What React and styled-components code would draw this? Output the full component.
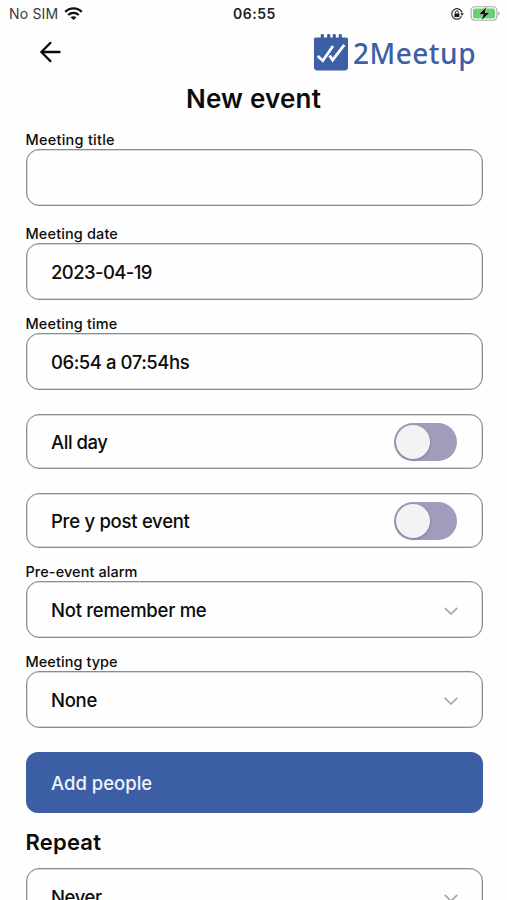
import React, { useState } from "react";
import styled, { createGlobalStyle } from "styled-components";

const GlobalStyle = createGlobalStyle`
  * {
    box-sizing: border-box;
  }
  body {
    margin: 0;
    background: #fefefe;
    color: #0c0c0c;
    font-family: Inter, "Liberation Sans", sans-serif;
  }
`;

const Screen = styled.div`
  width: 100%;
  height: 900px;
  overflow: hidden;
  display: flex;
  flex-direction: column;
`;

const StatusBar = styled.div`
  height: 28px;
  padding: 0 7px 0 9px;
  display: grid;
  grid-template-columns: 1fr auto 1fr;
  align-items: center;
  flex-shrink: 0;
`;

const StatusGroup = styled.div`
  display: flex;
  align-items: center;
  justify-content: ${(props) => (props.$end ? "flex-end" : "flex-start")};
  gap: 6px;
`;

const Carrier = styled.span`
  font-size: 14px;
  line-height: 28px;
  letter-spacing: 0.18px;
  color: #3a3a3a;
`;

const Clock = styled.span`
  font-size: 14px;
  font-weight: 600;
  line-height: 28px;
  letter-spacing: 0.5px;
  color: #222;
`;

const Header = styled.div`
  height: 48px;
  padding: 0 31px 0 38px;
  display: flex;
  align-items: center;
  justify-content: space-between;
  flex-shrink: 0;
`;

const BackButton = styled.button`
  border: none;
  padding: 0;
  background: none;
  display: flex;
`;

const Brand = styled.div`
  display: flex;
  align-items: center;
  gap: 4px;
`;

const BrandName = styled.span`
  font-family: "Noto Sans", sans-serif;
  font-size: 28px;
  font-weight: 500;
  line-height: 36px;
  letter-spacing: 0.5px;
  padding-top: 2px;
  color: #3c5fa6;
`;

const Title = styled.h1`
  margin: 7px 0 0;
  font-size: 26px;
  font-weight: 600;
  line-height: 32px;
  letter-spacing: 0.2px;
  text-align: center;
`;

const Form = styled.div`
  padding: 14px 24.5px 0 25.5px;
  display: flex;
  flex-direction: column;
`;

const Field = styled.div`
  margin-top: ${(props) => props.$top || 0}px;
  display: flex;
  flex-direction: column;
`;

const Label = styled.label`
  font-size: 14.5px;
  font-weight: 500;
  line-height: 21px;
  height: 20px;
  letter-spacing: ${(props) => props.$spacing || 0}px;
`;

const Box = styled.div`
  height: ${(props) => props.$height || 57}px;
  margin-top: ${(props) => props.$top || 0}px;
  padding: 0 23px 0 24.5px;
  border: 1px solid #8c8c8c;
  border-radius: 13px;
  box-shadow: inset 0 0 0 0.5px #b4b4b4;
  display: flex;
  align-items: center;
  justify-content: space-between;
  flex-shrink: 0;
`;

const Value = styled.span`
  font-size: 18.5px;
  font-weight: 500;
  line-height: 26px;
  letter-spacing: ${(props) => props.$spacing || 0}px;
`;

const Track = styled.button`
  width: 63px;
  height: 38px;
  margin-right: 1.5px;
  padding: 0 2px;
  border: none;
  border-radius: 19px;
  background: #a09cbc;
  display: flex;
  align-items: center;
  justify-content: ${(props) => (props.$on ? "flex-end" : "flex-start")};
`;

const Knob = styled.span`
  width: 34px;
  height: 34px;
  border-radius: 50%;
  background: #f3f3f4;
  box-shadow: 0 1px 3px rgba(60, 50, 100, 0.35);
`;

const AddButton = styled.button`
  height: 61px;
  margin-top: 24px;
  padding: 0 25.5px;
  border: none;
  border-radius: 12px;
  background: #3c5ea5;
  color: #eef3ff;
  font-family: inherit;
  text-align: left;
  flex-shrink: 0;
`;

const SectionTitle = styled.h2`
  margin: 13px 0 0;
  font-size: 22px;
  font-weight: 600;
  line-height: 32px;
  letter-spacing: 0.2px;
`;

const WifiIcon = () => (
  <svg width="19" height="14" viewBox="0 0 19 14" fill="none" stroke="#111" strokeWidth="2.3">
    <path d="M1.2 4.9C5.8 0.3 13.2 0.3 17.8 4.9" />
    <path d="M4.2 8C7.2 5.2 11.8 5.2 14.8 8" />
    <path d="M9.5 13.1L6.5 10.2C8.2 8.8 10.8 8.8 12.5 10.2Z" fill="#111" stroke="none" />
  </svg>
);

const RotationLockIcon = () => (
  <svg width="14" height="14" viewBox="0 0 14 14" fill="none">
    <path d="M11.6 9.3A5.2 5.2 0 1 1 12 5.6" stroke="#333" strokeWidth="1.2" />
    <path d="M10.4 6.3h3.4l-1.7 2.6z" fill="#222" />
    <rect x="4.4" y="6.4" width="5" height="3.6" rx="0.5" fill="#111" />
    <path d="M5.4 6.6V5.4a1.5 1.5 0 0 1 3 0v1.2" stroke="#111" strokeWidth="1" />
  </svg>
);

const BatteryIcon = () => (
  <svg width="30" height="16" viewBox="0 0 30 16" fill="none">
    <rect x="1.1" y="0.8" width="25.8" height="13.4" rx="3.6" stroke="#a8a8a8" strokeWidth="1.1" />
    <rect x="3" y="2.6" width="22" height="9.8" rx="2" fill="#67d170" />
    <path d="M28.2 5.2v4.4c1.8-.7 1.8-3.7 0-4.4z" fill="#a3a3a3" />
    <path d="M16.6 0.6L8.6 8.4h4.8L11.2 14.8L20 6.4h-5z" fill="#0a0a0a" stroke="#e8f8e8" strokeWidth="0.5" />
  </svg>
);

const ArrowIcon = () => (
  <svg width="24" height="24" viewBox="0 0 24 24" fill="none" stroke="#0a0a0a" strokeWidth="2.3" strokeLinecap="round" strokeLinejoin="round">
    <path d="M12.4 2.9L3.4 12l9 9.1" />
    <path d="M3.6 12h18" />
  </svg>
);

const LogoIcon = () => (
  <svg width="35" height="37" viewBox="0 0 35 37" fill="none">
    <path d="M1.5 3.5H32.5Q34 3.5 34 5V33Q34 36.5 30.5 36.5H3.5Q0 36.5 0 33V5Q0 3.5 1.5 3.5Z" fill="#3c5fa6" />
    <path d="M8.3 1.5V4M14.7 1.5V4M20.3 1.5V4M26.3 1.5V4" stroke="#3c5fa6" strokeWidth="3.2" strokeLinecap="round" />
    <path d="M3.7 22L8.8 26.7L19 12" stroke="#fff" strokeWidth="2.8" />
    <path d="M15.6 21.5L18.6 26L30.3 10.8" stroke="#fff" strokeWidth="2.8" />
  </svg>
);

const Chevron = styled.svg`
  margin-top: 2px;
`;

const ChevronIcon = () => (
  <Chevron width="16" height="10" viewBox="0 0 16 10" fill="none" stroke="#a5a5a5" strokeWidth="1.7" strokeLinecap="round" strokeLinejoin="round">
    <path d="M2.2 2.4L8 8l5.8-5.6" />
  </Chevron>
);

function SwitchBox({ label, spacing, top }) {
  const [on, setOn] = useState(false);

  return (
    <Box $height={55} $top={top}>
      <Value $spacing={spacing}>{label}</Value>
      <Track $on={on} onClick={() => setOn(!on)}>
        <Knob />
      </Track>
    </Box>
  );
}

function SelectBox({ value, spacing, top }) {
  return (
    <Box $top={top}>
      <Value $spacing={spacing}>{value}</Value>
      <ChevronIcon />
    </Box>
  );
}

function App() {
  return (
    <Screen>
      <GlobalStyle />
      <StatusBar>
        <StatusGroup>
          <Carrier>No SIM</Carrier>
          <WifiIcon />
        </StatusGroup>
        <Clock>06:55</Clock>
        <StatusGroup $end>
          <RotationLockIcon />
          <BatteryIcon />
        </StatusGroup>
      </StatusBar>
      <Header>
        <BackButton>
          <ArrowIcon />
        </BackButton>
        <Brand>
          <LogoIcon />
          <BrandName>2Meetup</BrandName>
        </Brand>
      </Header>
      <Title>New event</Title>
      <Form>
        <Field>
          <Label $spacing={0.25}>Meeting title</Label>
          <Box />
        </Field>
        <Field $top={17}>
          <Label $spacing={0.13}>Meeting date</Label>
          <Box>
            <Value $spacing={-0.6}>2023-04-19</Value>
          </Box>
        </Field>
        <Field $top={13}>
          <Label $spacing={0.13}>Meeting time</Label>
          <Box>
            <Value $spacing={-0.45}>06:54 a 07:54hs</Value>
          </Box>
        </Field>
        <SwitchBox label="All day" spacing={-0.45} top={24} />
        <SwitchBox label="Pre y post event" spacing={-0.27} top={24} />
        <Field $top={13}>
          <Label $spacing={0.07}>Pre-event alarm</Label>
          <SelectBox value="Not remember me" spacing={-0.27} />
        </Field>
        <Field $top={13}>
          <Label $spacing={0.06}>Meeting type</Label>
          <SelectBox value="None" spacing={-0.3} />
        </Field>
        <AddButton>
          <Value>Add people</Value>
        </AddButton>
        <SectionTitle>Repeat</SectionTitle>
        <SelectBox value="Never" spacing={-0.4} top={10} />
      </Form>
    </Screen>
  );
}

export default App;
